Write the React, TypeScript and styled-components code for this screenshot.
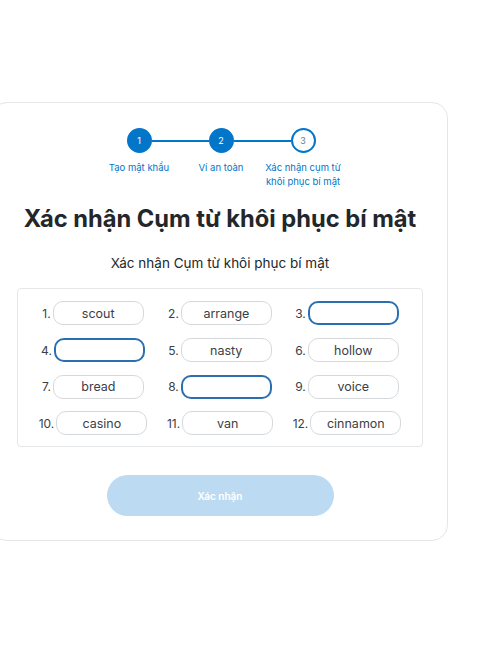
import React from "react";
import styled, { createGlobalStyle } from "styled-components";

const Global = createGlobalStyle`
  html, body { margin: 0; padding: 0; background: #ffffff; }
  body { font-family: Inter, "Noto Sans", sans-serif; color: #24272a; overflow: hidden; }
  * { box-sizing: border-box; }
`;

const Page = styled.div`
  width: 480px;
  height: 650px;
  padding-top: 102px;
`;

const Card = styled.div`
  margin-left: -9px;
  width: 457px;
  height: 439px;
  border: 1px solid #e4e6e8;
  border-radius: 16px;
  background: #fff;
  padding: 25px 24px 0 25px;
  display: flex;
  flex-direction: column;
  align-items: center;
`;

const Steps = styled.div`
  display: flex;
  margin-left: 2px;
`;

const Step = styled.div`
  width: 82px;
  display: flex;
  flex-direction: column;
  align-items: center;
`;

const Track = styled.div`
  width: 100%;
  display: flex;
  align-items: center;
`;

const Half = styled.div<{ $show: boolean }>`
  flex: 1;
  height: 2px;
  background: ${(p) => (p.$show ? "#0376c9" : "transparent")};
`;

const Circle = styled.div<{ $done: boolean }>`
  width: 25px;
  height: 25px;
  border-radius: 50%;
  flex: none;
  display: flex;
  align-items: center;
  justify-content: center;
  font-size: 9px;
  background: ${(p) => (p.$done ? "#0376c9" : "#fff")};
  border: 2px solid #0376c9;
  color: ${(p) => (p.$done ? "#fff" : "#5b7ea0")};
`;

const StepLabel = styled.div`
  margin-top: 8px;
  font-size: 9.5px;
  line-height: 14px;
  color: #0376c9;
  text-align: center;
  width: 80px;
`;

const Title = styled.h1`
  margin: 15px 0 0;
  font-size: 23.7px;
  line-height: 30px;
  font-weight: 700;
  color: #24272a;
  white-space: nowrap;
`;

const Subtitle = styled.p`
  margin: 20px 0 0;
  font-size: 13.5px;
  line-height: 18px;
  color: #24272a;
`;

const WordBox = styled.div`
  margin-top: 16px;
  width: 406px;
  height: 159px;
  border: 1px solid #e4e6e8;
  border-radius: 4px;
  padding-top: 6px;
  display: grid;
  grid-template-columns: repeat(3, 127px);
  grid-auto-rows: 36.7px;
  justify-content: center;
  align-content: start;
`;

const Cell = styled.div`
  display: flex;
  align-items: center;
  justify-content: center;
  gap: 2px;
`;

const Num = styled.span`
  font-size: 12px;
  color: #3b4046;
`;

const Word = styled.div<{ $empty: boolean }>`
  width: 91px;
  height: 24px;
  border-radius: 10px;
  border: ${(p) => (p.$empty ? "2px solid #2b6fb0" : "1px solid #d6d9dc")};
  display: flex;
  align-items: center;
  justify-content: center;
  font-size: 12.5px;
  color: #3b4046;
  background: #fff;
`;

const Button = styled.button`
  margin-top: 28px;
  width: 227px;
  height: 41px;
  border-radius: 21px;
  border: none;
  background: #bcdbf2;
  color: #fff;
  font-family: Inter, "Noto Sans", sans-serif;
  font-size: 10px;
  font-weight: 600;
`;

const steps = [
  { n: 1, label: "Tạo mật khẩu", done: true },
  { n: 2, label: "Ví an toàn", done: true },
  { n: 3, label: "Xác nhận cụm từ khôi phục bí mật", done: false },
];

const words = [
  "scout", "arrange", "", "", "nasty", "hollow",
  "bread", "", "voice", "casino", "van", "cinnamon",
];

export default function App() {
  return (
    <Page>
      <Global />
      <Card>
        <Steps>
          {steps.map((s, i) => (
            <Step key={s.n}>
              <Track>
                <Half $show={i > 0} />
                <Circle $done={s.done}>{s.n}</Circle>
                <Half $show={i < steps.length - 1} />
              </Track>
              <StepLabel>{s.label}</StepLabel>
            </Step>
          ))}
        </Steps>
        <Title>Xác nhận Cụm từ khôi phục bí mật</Title>
        <Subtitle>Xác nhận Cụm từ khôi phục bí mật</Subtitle>
        <WordBox>
          {words.map((w, i) => (
            <Cell key={i}>
              <Num>{i + 1}.</Num>
              <Word $empty={w === ""}>{w}</Word>
            </Cell>
          ))}
        </WordBox>
        <Button>Xác nhận</Button>
      </Card>
    </Page>
  );
}
